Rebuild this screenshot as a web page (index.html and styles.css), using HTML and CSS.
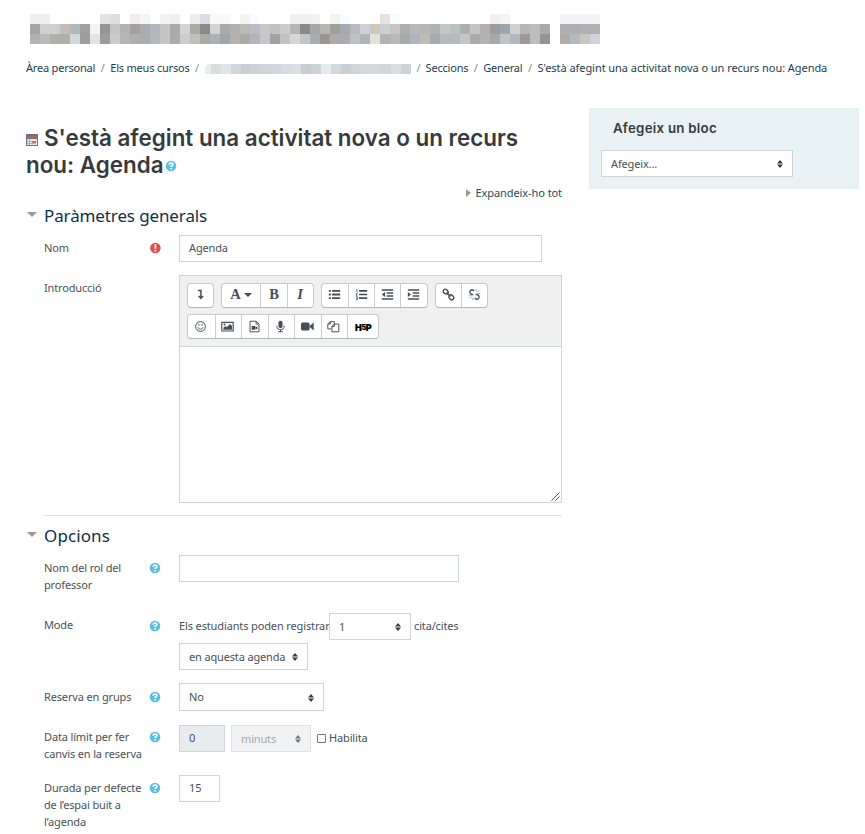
FILE: index.html
```html
<!DOCTYPE html>
<html lang="ca">
<head>
<meta charset="utf-8">
<title>Agenda</title>
<link rel="stylesheet" href="styles.css">
</head>
<body>
<svg width="0" height="0" class="defs">
  <symbol id="help" viewBox="0 0 12 12"><circle cx="6" cy="6" r="5.3" fill="#5bbfde"/><path d="M4.200 4.700c0-2.200 3.700-2.200 3.700-.1C7.900 5.800 6.100 5.700 6.100 6.900M6.100 8v1.400" fill="none" stroke="#fff" stroke-width="1.600"/></symbol>
  <symbol id="sort" viewBox="0 0 6 8"><path d="M0 3.400 3 0l3 3.400zM0 4.600h6L3 8z" fill="currentColor"/></symbol>
</svg>
<header>
  <div class="mosaic" id="course"></div>
  <nav class="crumbs">
    <a>Àrea personal</a><i>/</i><a>Els meus cursos</a><i>/</i><span class="mosaic small" id="crumb"></span><i class="tight">/</i><a>Seccions</a><i>/</i><a>General</a><i>/</i><a class="last">S'està afegint una activitat nova o un recurs nou: Agenda</a>
  </nav>
</header>
<div class="page">
<main>
  <h2><svg class="cal" width="12" height="12" viewBox="0 0 12 12"><path fill="#5d7888" d="M0 0h12v12H0z"/><path fill="#d9534f" d="M1 2h10v2H1z"/><path fill="#dfe6ea" d="M1 5h10v6H1z"/><path fill="#e0685b" d="M6 7h4v2H6z"/><path d="M1 7.500h5M1 9.500h9M3.500 5v6" stroke="#8fa7b5" stroke-width=".7"/></svg>S'està afegint una activitat nova o un recurs<br>nou: Agenda<svg class="help" width="12" height="12"><use href="#help"/></svg></h2>
  <div class="expand"><b></b><a>Expandeix-ho tot</a></div>
  <section>
    <h3>Paràmetres generals</h3>
    <div class="row r-name"><label>Nom</label><span class="ic"><svg width="12" height="12" viewBox="0 0 12 12"><circle cx="6.400" cy="6" r="5.300" fill="#d9534f"/><path d="M6.400 2.300v4.500M6.400 8v1.500" stroke="#fff" stroke-width="1.700"/></svg></span><div class="ctl input w363">Agenda</div></div>
    <div class="row r-intro"><label>Introducció</label><span class="ic"></span>
      <div class="editor">
        <div class="toolbar">
          <div class="group"><span class="btn"><svg viewBox="0 0 16 16"><path d="M5 3h3.500v9M5.800 9.800l2.700 3 2.700-3" fill="none" stroke="#444d56" stroke-width="1.800"/></svg></span></div>
          <div class="group"><span class="btn wide serif">A<b class="caret"></b></span><span class="btn serif">B</span><span class="btn serif it">I</span></div>
          <div class="group"><span class="btn"><svg viewBox="0 0 16 16"><path d="M5 3.500h10M5 8h10M5 12.500h10M1 3.500h2.500M1 8h2.500M1 12.500h2.500" stroke="#444d56" stroke-width="2.200"/></svg></span><span class="btn"><svg viewBox="0 0 16 16"><path d="M5 3.500h10M5 8h10M5 12.500h10" stroke="#444d56" stroke-width="2"/><path d="M1.500 2h1v3M1 6.500h2L1.300 9H3M1 10.800h2v3.500H1M1.500 12.500H3" fill="none" stroke="#444d56"/></svg></span><span class="btn"><svg viewBox="0 0 16 16"><path d="M1 2.500h14M7 6.200h8M7 9.800h8M1 13.500h14" stroke="#444d56" stroke-width="2"/><path d="m5 5v6L1 8z" fill="#444d56"/></svg></span><span class="btn"><svg viewBox="0 0 16 16"><path d="M1 2.500h14M7 6.200h8M7 9.800h8M1 13.500h14" stroke="#444d56" stroke-width="2"/><path d="M1 5v6l4-3z" fill="#444d56"/></svg></span></div>
          <div class="group links"><span class="btn"><svg viewBox="0 0 16 16"><g fill="none" stroke="#444d56" stroke-width="1.700"><rect x="1.300" y="2" width="6.500" height="5" rx="2.500" transform="rotate(45 4.500 4.500)"/><rect x="8.200" y="9" width="6.500" height="5" rx="2.500" transform="rotate(45 11.500 11.500)"/><path d="m5.500 5.500 5 5"/></g></svg></span><span class="btn"><svg viewBox="0 0 16 16"><g fill="none" stroke="#444d56" stroke-width="1.700"><path d="M7.500 3.500 6 2.300C4 1.500 1.500 4 2.500 6l2 2h2M8.500 12.500l1.500 1.200c2 .8 4.500-1.700 3.500-3.700l-2-2h-2"/></g><path d="M10 4V1M11.500 5l2-2M12 6.500h3M6 12v3M4.500 11l-2 2M4 9.500H1" stroke="#6c8fa5"/></svg></span></div>
        </div>
        <div class="toolbar second">
          <div class="group"><span class="btn"><svg viewBox="0 0 16 16"><g fill="none" stroke="#444d56" stroke-width="1.200"><circle cx="8" cy="8" r="6"/><path d="M4.800 9c.8 3 5.600 3 6.400 0M6 5v2M10 5v2"/></g></svg></span><span class="btn"><svg viewBox="0 0 16 16"><path d="M1 3h14v10.500H1z" fill="none" stroke="#444d56" stroke-width="1.400"/><path d="M3 12V9.500L5.500 7.500 7 9l4-4 2.500 2.500V12z" fill="#444d56"/><circle cx="4.300" cy="5.600" r="1.200" fill="#444d56"/></svg></span><span class="btn"><svg viewBox="0 0 16 16"><path d="M2.500 1.500h7.500l3.500 3.500v9.500h-11zM10 1.500V5h3.500" fill="none" stroke="#444d56" stroke-width="1.200"/><path d="M4.500 7.500h4.500v4.500H4.500zM9 9.500l2.500-2v4.500L9 10z" fill="#444d56"/></svg></span><span class="btn"><svg viewBox="0 0 16 16"><rect x="5.500" y="1" width="5" height="9" rx="2.500" fill="#444d56"/><path d="M3.500 7v1c0 5.300 9 5.300 9 0V7M8 12v2.500M5 14.500h6" fill="none" stroke="#444d56" stroke-width="1.200"/></svg></span><span class="btn"><svg viewBox="0 0 16 16"><rect x="0" y="3" width="10.500" height="10" rx="2" fill="#444d56"/><path d="m10 8 5.500-5v10z" fill="#444d56"/></svg></span><span class="btn"><svg viewBox="0 0 16 16"><path d="M5 11H1V5l3-3h5v3M4 2v3H1M6 14.500V8l3-3h5.500v9.500zM9 5v3H6" fill="none" stroke="#444d56" stroke-width="1.200"/></svg></span><span class="btn h5p">H<small>5</small>P</span></div>
        </div>
        <div class="area"><svg class="grip" width="9" height="9" viewBox="0 0 9 9"><path d="M.5 8.500l8-8M4.500 8.500l4-4" stroke="#555"/></svg></div>
      </div>
    </div>
  </section>
  <section class="options">
    <h3>Opcions</h3>
    <div class="row r-role"><label>Nom del rol del<br>professor</label><span class="ic"><svg width="12" height="12"><use href="#help"/></svg></span><div class="ctl input w280"></div></div>
    <div class="row r-mode"><label>Mode</label><span class="ic"><svg width="12" height="12"><use href="#help"/></svg></span>
      <div class="ctl"><div class="line"><span class="pre">Els estudiants poden registrar</span><div class="input select w82">1<svg><use href="#sort"/></svg></div><span class="post">cita/cites</span></div><div class="input select w129">en aquesta agenda<svg><use href="#sort"/></svg></div></div></div>
    <div class="row r-group"><label>Reserva en grups</label><span class="ic"><svg width="12" height="12"><use href="#help"/></svg></span><div class="ctl input select w145">No<svg><use href="#sort"/></svg></div></div>
    <div class="row r-date"><label>Data límit per fer<br>canvis en la reserva</label><span class="ic"><svg width="12" height="12"><use href="#help"/></svg></span><div class="ctl line"><div class="input w46 off">0</div><div class="input select w80 off2">minuts<svg><use href="#sort"/></svg></div><span class="check"></span><span>Habilita</span></div></div>
    <div class="row r-dur"><label>Durada per defecte<br>de l’espai buit a<br>l’agenda</label><span class="ic"><svg width="12" height="12"><use href="#help"/></svg></span><div class="ctl input w41">15</div></div>
  </section>
</main>
<aside><h4>Afegeix un bloc</h4><div class="input select w192">Afegeix...<svg><use href="#sort"/></svg></div></aside>
</div>
<script src="mosaic.js"></script>
</body>
</html>
```
FILE: styles.css
```css
* { box-sizing: border-box; }
body { margin: 0; width: 865px; height: 834px; overflow: hidden; background: #fff; color: #495057; font: 11px/17px "Noto Sans", sans-serif; letter-spacing: -.15px; white-space: nowrap; }
.defs { display: block; }
header { height: 108px; padding: 14px 0 0 26px; }
.mosaic { display: grid; grid-template-columns: repeat(57, 10px); grid-template-rows: 10px 10px 10px; margin-left: 4px; height: 46px; }
.crumbs { display: flex; height: 17px; color: #1d3d50; letter-spacing: -.2px; }
.crumbs a { margin-top: -1px; }
.crumbs i { width: 15px; margin-top: -1px; text-align: center; font-style: normal; color: #868e96; }
.crumbs .tight { width: 14px; }
.crumbs .last { letter-spacing: -.055px; }
.mosaic.small { grid-template-columns: repeat(21, 10px); grid-template-rows: 10px; height: 10px; margin: 4px 1px 0 0; width: 206px; overflow: hidden; justify-content: end; border-radius: 5px 0 0 0; }
.page { display: flex; }
main { width: 563px; padding: 16px 0 0 26px; }
h2 { margin: 0; font: 600 22.400px/27px Inter, sans-serif; letter-spacing: 0; color: #373a3c; height: 55px; }
.cal { margin-right: 6px; }
.help { vertical-align: 1px; margin-left: 1px; }
.expand { display: flex; justify-content: flex-end; align-items: center; height: 17px; margin-top: 5px; padding-right: 1px; color: #1d4d64; letter-spacing: -.08px; }
.expand b { border: 4px solid transparent; border-left: 5px solid #999; border-right: 0; margin-right: 5px; }
h3 { margin: 1px 0 0; padding-left: 18px; font: 400 17px/27px "Noto Sans", sans-serif; letter-spacing: -.12px; color: #0f2f4c; height: 34px; position: relative; }
.options h3 { letter-spacing: .1px; }
h3::before { content: ""; position: absolute; left: 1px; top: 10px; border: 5px solid transparent; border-top-color: #999; border-bottom: 0; }
section { padding-bottom: 12px; }
.row { display: flex; padding-left: 18px; }
.row label { width: 105px; padding-top: 4px; }
.ic { width: 30px; padding-top: 7px; }
.ic svg { display: block; }
.input { height: 27px; border: 1px solid #ced4da; background: #fff; padding: 0 9px; line-height: 24px; color: #495057; }
.select { display: flex; justify-content: space-between; line-height: 25px; }
.select svg { width: 6px; height: 8px; margin-top: 9px; color: #343a40; }
.w363 { width: 363px; } .w280 { width: 280px; } .w82 { width: 82px; } .w129 { width: 129px; } .w145 { width: 145px; }
.w46 { width: 46px; } .w80 { width: 80px; } .w41 { width: 41px; } .w192 { width: 192px; }
.r-name { height: 40px; margin-top: -1px; }
.editor { width: 383px; height: 228px; border: 1px solid #ced4da; }
.toolbar { display: flex; gap: 7px; background: #f0f0f0; padding: 7px 7px 0; height: 38px; letter-spacing: 0; }
.toolbar.second { height: 33px; padding-top: 0; border-bottom: 1px solid #ced4da; }
.group { display: flex; height: 25px; border: 1px solid #c8c8cc; border-bottom-color: #b3b3b8; border-radius: 4px; background: #fff; }
.btn { width: 26.2px; display: flex; align-items: center; justify-content: center; color: #444d56; padding-bottom: 2px; }
.second .btn { width: 26.5px; padding: 0 1px 1px 0; }
.btn + .btn { border-left: 1px solid #ccc; }
.btn:only-child { width: 24.8px; }
.links .btn { width: 25.8px; }
.btn svg { width: 13px; height: 13px; }
.btn.wide { width: 38.6px; }
.serif { font: 700 14.5px "Liberation Serif", serif; }
.it { font-style: italic; }
.caret { border: 4px solid transparent; border-top-color: #444d56; border-bottom: 0; margin-left: 3px; }
.second .btn.h5p { width: 31.3px; font: 900 9px Inter, sans-serif; color: #000; letter-spacing: -.3px; -webkit-text-stroke: .2px; padding: 1px 0 0; }
.h5p small { font-size: 7px; }
.area { height: 155px; display: flex; justify-content: flex-end; align-items: flex-end; padding: 1px; }
.options { margin-left: 18px; margin-right: 1px; border-top: 1px solid #dee2e6; padding-top: 5px; }
.options h3 { margin-left: -18px; }
.options .row { padding-left: 0; }
.r-role { height: 58px; margin-top: -1px; }
.r-mode { height: 70px; }
.r-mode label, .r-date label { padding-top: 3px; }
.r-date .ic { padding-top: 6px; }
.r-group { height: 42px; }
.r-group label { padding-top: 5px; }
.r-group .ic { padding-top: 8px; }
.r-group .input { height: 28px; line-height: 26px; }
.r-group .select svg { margin-top: 10px; }
.r-date { height: 50px; }
.line { display: flex; line-height: 26px; }
.r-mode .line { margin-bottom: 3px; }
.pre { width: 150px; letter-spacing: -.13px; } .post { margin-left: 3px; }
.off { background: #e9ecef; } .off2 { background: #f1f2f3; margin-left: 6px; color: #a5a9ad; border-color: #dee2e6; }
.off2 svg { color: #777; }
.check { width: 9px; height: 9px; border: 1px solid #767676; border-radius: 1px; margin: 9px 3px 0 6px; }
aside { margin-left: 26px; width: 270px; height: 81px; background: #e8f1f4; padding: 12px; }
h4 { margin: 0 0 13px 12px; font: 600 13.3px/17px Inter, sans-serif; letter-spacing: .25px; color: #373a3c; }
```
FILE: mosaic.js
```js
const course = [
  'eee eee fff fff fff fff fff e5e3e2 dcdedf fff efeceb f3f5f6 fff f2f2f2 efefef fff ececeb d9dce0 f9f8f7 f7f9fb fff f6f4f3 fafcff fff fff fff f0f0f0 f0f0f0 f1f1f1 fff f4f3f2 fbfcff fff fff fff e2e2e2 f9fbfd fff fff fff fff fff fff fff fff fff f0f0f0 f3f5f8 fff fff fff fff fff f3f4f3 f3f4f3 f3f4f3 f3f4f3',
  'a3a5a3 cfd1d0 ced0d0 c2bdba b1b8be a19e9e f0f5fa 999597 c3c7ca b4b3b1 a4a09f a9adb3 b4b8bc c5c5c5 adaba9 d1d5d8 abaaa5 8a8a8a d0d4d4 a8abae b3b1ae bcbab7 babcc6 c5c9cc c3c0be c9cdd0 b3b5b6 8b8a86 a3a8ad b8b6b3 a19e98 a5aab0 b8b9ba cdd0d7 cec6bf cad1d4 c8c5c2 acaeb0 b8babf b8b7b2 b0b3b5 c4c7c8 b9c0c3 b0afad c3c5c6 b5b0ad 9d9c9c 9ca5ad d0d2d4 b8b7b7 bfbdba a5abb0 fff adb1b2 adb0ae b0b1b2 b0b1b3',
  'b5b1af b9babb b0afac b0afac d2d8dc 9d9d9d dfe4e9 9f9a9c c8cccf b5b5b3 b2aeac a9adb2 b5b9be c5c5c5 adaba9 c9cdcf c0bfba abaaa5 aeb0b3 a0a5a9 b6b1ae acaaa7 b5b5b7 c3c7cb a3a19f bfc3c6 dbd6d1 c3c6c8 a9adb2 99978f aeacaa a9abb0 bfc0c2 b1b4b7 e4e0da b1b3b7 b9b8b6 a8a9ad afb4c0 c1bbb9 a7aaad b4b9bd b4b9bc c5c5c5 adaba8 b4b3b1 aaa7a8 c0c4c8 b1b6c0 9d9a9a bdbebb 929297 fff aeabaa b4b8bf cbc5c1 d0d3d9'
];
const crumb = 'e8eceb d9dddc dfe6eb d2d6da caced3 ced2d7 d0d3da d2d5dd d8dbe2 dddee3 c9ced1 cdd2d4 e7eaeb d2dae1 cbcfd1 d2d5d8 d5d8da d5d8da d3d6d9 d9dde0 ccd2d5';
function paint(id, colours) {
  const box = document.getElementById(id);
  for (const c of colours.split(' ')) {
    const cell = document.createElement('span');
    cell.style.background = '#' + c;
    box.append(cell);
  }
}
course.forEach(row => paint('course', row));
paint('crumb', crumb);
```
